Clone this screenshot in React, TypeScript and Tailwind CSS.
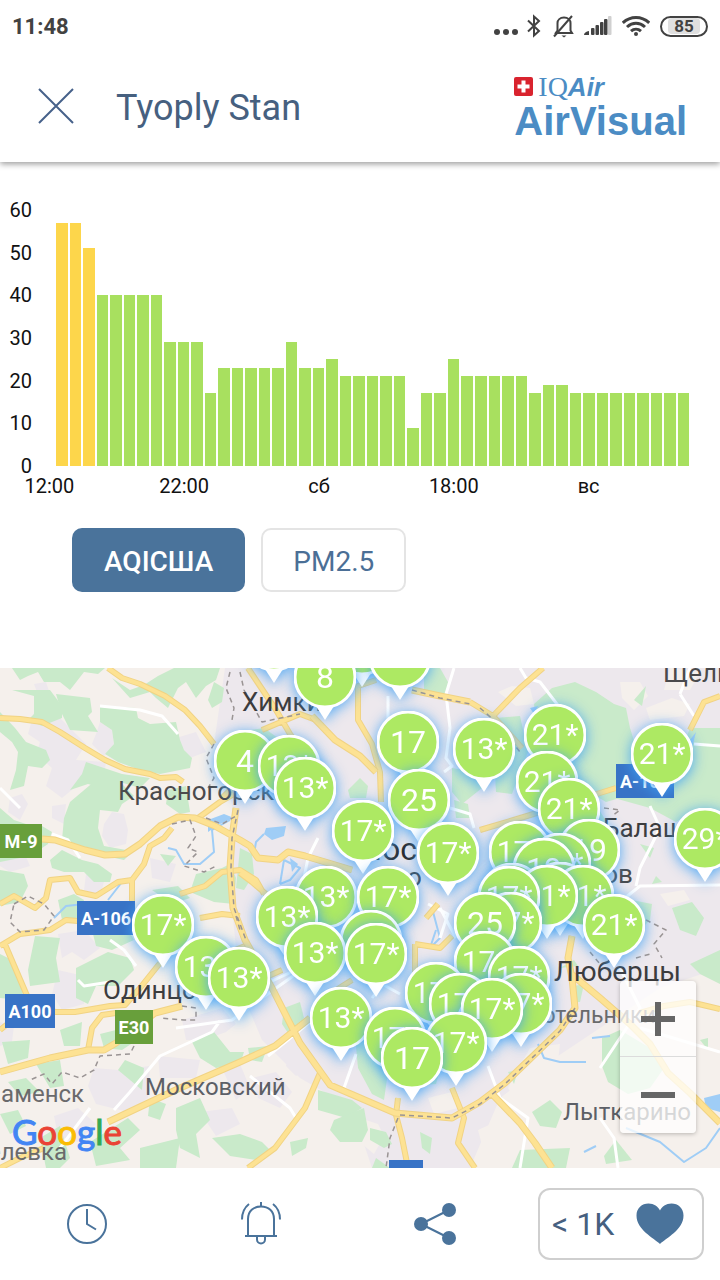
import { Fragment } from "react";

const HISTORY = [
  57, 57, 51, 40, 40, 40, 40, 40, 29, 29, 29, 17, 23, 23, 23, 23, 23, 29, 23,
  23, 25, 21, 21, 21, 21, 21, 9, 17, 17, 25, 21, 21, 21, 21, 21, 17, 19, 19,
  17, 17, 17, 17, 17, 17, 17, 17, 17,
];
const MAX_AQI = 60;
const Y_TICKS = [60, 50, 40, 30, 20, 10, 0];
const X_TICKS = ["12:00", "22:00", "сб", "18:00", "вс"];

type Pin = { x: number; y: number; label: string };

// pins further down the list are drawn on top
const PINS: Pin[] = [
  { x: 274, y: -28, label: "" },
  { x: 362, y: -24, label: "" },
  { x: 400, y: -11, label: "17" },
  { x: 325, y: 9, label: "8" },
  { x: 555, y: 67, label: "21*" },
  { x: 408, y: 74, label: "17" },
  { x: 484, y: 81, label: "13*" },
  { x: 662, y: 86, label: "21*" },
  { x: 245, y: 93, label: "4" },
  { x: 289, y: 98, label: "13*" },
  { x: 547, y: 114, label: "21*" },
  { x: 305, y: 120, label: "13*" },
  { x: 419, y: 132, label: "25" },
  { x: 569, y: 141, label: "21*" },
  { x: 363, y: 163, label: "17*" },
  { x: 705, y: 171, label: "29*" },
  { x: 589, y: 182, label: "19" },
  { x: 520, y: 184, label: "17*" },
  { x: 448, y: 185, label: "17*" },
  { x: 560, y: 196, label: "17*" },
  { x: 544, y: 201, label: "19" },
  { x: 560, y: 225, label: "" },
  { x: 512, y: 226, label: "" },
  { x: 583, y: 228, label: "21*" },
  { x: 547, y: 228, label: "21*" },
  { x: 509, y: 229, label: "17*" },
  { x: 326, y: 229, label: "13*" },
  { x: 388, y: 229, label: "17*" },
  { x: 287, y: 249, label: "13*" },
  { x: 511, y: 255, label: "17*" },
  { x: 485, y: 255, label: "25" },
  { x: 614, y: 257, label: "21*" },
  { x: 163, y: 257, label: "17*" },
  { x: 371, y: 273, label: "" },
  { x: 315, y: 285, label: "13*" },
  { x: 376, y: 286, label: "17*" },
  { x: 485, y: 294, label: "17*" },
  { x: 206, y: 299, label: "13*" },
  { x: 519, y: 309, label: "17*" },
  { x: 239, y: 310, label: "13*" },
  { x: 436, y: 325, label: "17*" },
  { x: 460, y: 336, label: "17*" },
  { x: 521, y: 336, label: "17*" },
  { x: 492, y: 341, label: "17*" },
  { x: 341, y: 350, label: "13*" },
  { x: 395, y: 370, label: "17*" },
  { x: 456, y: 375, label: "17*" },
  { x: 412, y: 390, label: "17" },
];

const CITIES = [
  { x: 242, y: 21, text: "Химки", style: "text-[26px] text-[#3c3c3e]" },
  { x: 663, y: -8, text: "Щелково", style: "text-[26px] text-[#4a4a4c]" },
  { x: 118, y: 110, text: "Красногорск", style: "text-[26px] text-[#4a4a4c]" },
  { x: 603, y: 147, text: "Балашиха", style: "text-[26px] text-[#3c3c3e]" },
  { x: 354, y: 165, text: "Москва", style: "text-[32px] text-[#2c2c2e]" },
  { x: 407, y: 196, text: "о", style: "text-[26px] text-[#3c3c3e]" },
  { x: 549, y: 193, text: "Реутов", style: "text-[26px] text-[#4a4a4c]" },
  { x: 554, y: 290, text: "Люберцы", style: "text-[28px] text-[#3c3c3e]" },
  { x: 103, y: 309, text: "Одинцово", style: "text-[26px] text-[#3c3c3e]" },
  { x: 528, y: 336, text: "Котельники", style: "text-[23px] text-[#6a6a6c]" },
  { x: 145, y: 407, text: "Московский", style: "text-[24px] text-[#5c5f66]" },
  { x: -27, y: 414, text: "Знаменск", style: "text-[24px] text-[#6a6a6c]" },
  { x: 563, y: 432, text: "Лыткарино", style: "text-[24px] text-[#5c5f66]" },
  { x: -55, y: 472, text: "Апрелевка", style: "text-[24px] text-[#6a6a6c]" },
];

const SHIELDS = [
  { x: 0, y: 156, text: "M-9", style: "w-[42px] bg-[#689f3b]" },
  { x: 77, y: 233, text: "A-106", style: "w-[58px] bg-[#3873c6]" },
  { x: 616, y: 96, text: "A-103", style: "w-[58px] bg-[#3873c6]" },
  { x: 5, y: 326, text: "A100", style: "w-[50px] bg-[#3873c6]" },
  { x: 115, y: 342, text: "E30", style: "w-[38px] bg-[#689f3b]" },
  { x: 389, y: 492, text: "M-4", style: "w-[34px] bg-[#3873c6]" },
];

const GOOGLE = [
  ["G", "text-[#4285f4]"],
  ["o", "text-[#ea4335]"],
  ["o", "text-[#fbbc05]"],
  ["g", "text-[#4285f4]"],
  ["l", "text-[#34a853]"],
  ["e", "text-[#ea4335]"],
];

const LILAC = [
  "M225 0H720V300L660 320L600 360L540 400L500 430L470 500H372L352 440L300 410L262 372L240 320L232 240L236 150L214 76Z",
  "M34 44L60 50L86 76L76 92L106 94L104 108L84 112L62 130L46 118L52 100L36 86L40 74L28 66Z",
  "M100 54L112 62L114 76L104 88L92 76L96 66Z",
  "M34 16L46 14L50 26L40 32Z",
  "M176 70L196 64L206 84L190 90L184 82Z",
  "M10 130L22 126L28 136L20 152L8 144Z",
  "M104 156L112 144L124 146L128 162L126 176L110 180L102 168Z",
  "M52 138L66 136L64 156L52 150Z",
  "M0 182L24 184L30 198L10 204L0 198Z",
  "M86 206L104 214L100 228L84 222Z",
  "M150 190L176 196L170 214L152 210Z",
  "M58 266L84 262L100 280L84 292L72 284L62 290Z",
  "M58 302L84 308L84 336L62 342L52 326Z",
  "M94 400L118 402L150 398L148 430L128 444L96 436L88 418Z",
  "M158 388L200 392L196 410L160 410Z",
  "M182 352L222 340L236 356L226 364L204 372L186 372Z",
  "M0 354L14 358L12 374L0 378Z",
  "M54 448L78 440L96 456L78 474L58 468Z",
  "M200 444L232 440L240 456L216 468Z",
  "M288 386L304 384L312 398L296 408L286 398Z",
  "M252 410L276 404L292 424L280 440L258 430Z",
  "M222 400L240 396L250 420L236 432Z",
];

const BEIGE = [
  "M530 430L560 400L600 376L640 404L660 430L700 440L720 420V500H560L530 470Z",
  "M508 420L530 380L560 376L556 410L520 440Z",
  "M478 462L500 452L524 470L540 500H488Z",
  "M498 24L512 18L530 20L534 36L516 38Z",
  "M620 14L640 14L648 28L634 42L622 30Z",
  "M646 40L672 30L690 36L684 48L650 52Z",
  "M670 0L700 4L690 22L664 22Z",
  "M366 452L378 456L384 468L374 486L362 476Z",
  "M428 430L452 424L458 440L434 446Z",
  "M660 226L684 222L690 232L668 238Z",
];

const GREEN = [
  "M12 0H105L98 6L84 4L70 22L60 14L44 14L38 4L28 8L20 12Z",
  "M112 10L130 22L144 17L158 8L174 0H220L216 12L206 18L196 30L186 14L178 20L168 40L156 30L150 24L130 30Z",
  "M12 22L34 28L34 46L28 52L42 58L62 50L62 38L50 22Z",
  "M56 26L90 30L92 44L88 48L98 64L70 62L62 46Z",
  "M100 38L136 40L138 50L150 56L176 54L180 72L184 82L192 90L190 100L160 106L140 102L118 94L105 86L114 76L112 62L100 54Z",
  "M0 44L15 60L26 74L46 82L50 92L42 100L28 98L24 118L10 122L16 102L18 84L12 74L0 64Z",
  "M86 94L104 100L122 106L150 110L140 120L120 114L102 120L88 116L70 122L82 106Z",
  "M70 134L96 112L118 112L134 128L122 136L118 144L100 142L98 160L104 178L126 182L140 176L124 192L96 186L62 172L64 150Z",
  "M168 122L186 118L190 144L180 146L166 136Z",
  "M208 32L214 14L224 20L222 34L212 40Z",
  "M0 140L14 152L26 156L42 164V158L52 164L48 176L30 188L0 194Z",
  "M50 192L62 182L82 192L98 196L112 206L110 214L94 214L84 204L64 204L52 200Z",
  "M0 202L24 206L28 218L20 234L0 238Z",
  "M58 232L74 226L84 232L78 252L62 252Z",
  "M196 206L222 200L230 196L236 210L234 236L214 234L190 224Z",
  "M152 222L178 218L190 230L172 236Z",
  "M160 186L176 188L168 198Z",
  "M35 268L60 270L56 290L60 314L30 318L28 302Z",
  "M92 262L128 262L134 272L112 282L96 278Z",
  "M76 300L108 284L130 290L134 302L118 318L96 318L88 336L76 330Z",
  "M0 286L8 290L24 314L22 332L0 330Z",
  "M60 362L82 354L80 378L64 378Z",
  "M2 374L30 372L28 390L8 396Z",
  "M100 366L124 360L134 374L122 382L104 380Z",
  "M125 392L144 400L142 422L118 402Z",
  "M192 374L214 364L230 384L244 384L240 396L216 400L200 390Z",
  "M36 396L60 392L64 418L50 420Z",
  "M8 414L26 410L40 424L20 428Z",
  "M176 440L200 430L210 452L196 466L200 490L180 480L176 462Z",
  "M90 474L128 450L140 462L120 480L130 492L96 498Z",
  "M140 480L180 470L176 500H140Z",
  "M40 470L60 458L70 490L60 500H46Z",
  "M212 470L240 466L262 474L270 482L256 492L230 488Z",
  "M0 446L18 442L26 458L10 466Z",
  "M150 430L166 436L160 452L148 448Z",
  "M284 340L300 334L304 350L290 368L282 356Z",
  "M248 380L268 378L262 394L250 392Z",
  "M318 422L332 426L352 432L362 440L346 450L318 442Z",
  "M334 452L364 440L368 462L362 474L340 474L330 462Z",
  "M370 460L386 464L392 476L384 480L370 472Z",
  "M290 474L308 470L306 480L292 488Z",
  "M354 356L372 366L388 404L384 432L372 426L358 400Z",
  "M420 464L432 470L430 486L422 480Z",
  "M412 394L440 402L436 416L414 418Z",
  "M376 490L390 500H372Z",
  "M348 122L360 110L368 118L366 130L350 130Z",
  "M240 180L252 186L254 206L244 222L236 220Z",
  "M250 62L264 60L278 70L266 80L250 78Z",
  "M424 0H440L448 14L446 32L424 24Z",
  "M452 100L476 104L482 120L462 136L452 124Z",
  "M454 132L468 136L470 150L456 150Z",
  "M496 50L520 48L528 84L512 126L496 124L494 90Z",
  "M534 36L552 20L575 14L596 24L614 36L626 40L630 60L640 92L650 100L620 130L606 134L586 122L560 100L536 60Z",
  "M634 32L646 18L642 38Z",
  "M612 98L680 86L690 60L720 60V158L690 146L676 154L650 140L614 130Z",
  "M578 150L598 140L608 156L594 170Z",
  "M640 176L654 180L650 190Z",
  "M652 216L662 214L656 208Z",
  "M632 232L652 236L650 252L640 262Z",
  "M672 240L692 234L704 250L696 268L680 262Z",
  "M690 296L720 282V316L700 306Z",
  "M602 370L620 362L650 380L664 400L650 420L628 426L608 414L602 398Z",
  "M574 318L584 316L580 334L576 334Z",
  "M532 444L550 432L562 444L556 460L540 458Z",
  "M520 482L570 480L566 500H512Z",
  "M604 488L616 472L632 492L606 496Z",
  "M508 404L518 402L514 416Z",
  "M700 372L708 370L708 382Z",
  "M560 300L574 292L578 298Z",
];

const WATER = [
  "M208 152L224 146L234 150L220 156L208 164Z",
  "M266 160L286 158L284 168L272 172L264 166Z",
  "M704 430L720 426V444L706 440Z",
  "M530 40L538 38L534 46Z",
  "M690 72L696 64L692 80Z",
  "M290 190L298 196L292 204Z",
];

const STREAMS = [
  "M168 180L176 182L184 196L200 196L214 184L212 162L230 152",
  "M264 166L256 174L254 186",
  "M284 192L280 216M284 192L300 200L290 212L280 216",
  "M432 240L440 270L430 280L436 262",
  "M538 376L544 390L560 394L586 394",
  "M592 370L610 368",
  "M626 460L660 474L684 494L706 480L720 460",
  "M584 484L596 478",
  "M54 250L66 238L84 236M108 232L122 214",
];

const STREETS = [
  "M220 353L212 364L160 388L130 424L114 442",
  "M176 360L232 352L262 330L296 306",
  "M110 272L124 282L136 298",
  "M78 312L84 318L110 314",
  "M250 408L290 440L296 450",
  "M356 386L344 420L350 424",
  "M454 0L446 26L450 60L446 90L452 98L444 104",
  "M388 28V60",
  "M520 0L526 10L540 14L560 40",
  "M680 26L694 48M680 26L690 0",
  "M620 234L640 218L720 217M650 138L660 160L640 200L636 218",
  "M694 76L720 78",
  "M620 300L640 340L600 400M640 360L720 384",
  "M488 398L500 430L528 450L520 500",
  "M600 450L614 470L618 500",
  "M318 170L308 190L304 210",
  "M428 236L448 246L440 270M440 240L456 270M412 300L440 310L450 322",
  "M450 140L470 146L474 160",
  "M100 38L140 42L162 48L178 66",
  "M52 166L68 172L80 190",
  "M268 388L320 346M244 326L300 300",
  "M372 330L382 316L400 326",
  "M0 120L20 140M60 480L90 440",
];

const ROADS = [
  "M108 0L122 10L140 16L165 28L185 42L200 58L214 76",
  "M0 50L20 51L42 54L60 64L85 80L105 92L125 101L150 106L160 110L176 109L183 114",
  "M0 236L14 228L35 240L46 230L50 212L70 210L78 224L96 228L118 214L132 212L144 196L150 178L164 170L172 160",
  "M132 212V235M198 150L220 134L234 126",
  "M180 226L205 218L222 204L240 202L256 212L264 226",
  "M0 278L20 266L36 264L50 262L66 252L78 253M4 274L28 330L55 344",
  "M55 344L75 344L110 338L125 337L140 320L160 295M200 250L222 246L240 248",
  "M88 382L92 360L102 347L116 345",
  "M0 362L10 354",
  "M262 62L300 46L316 52M248 0L276 42L290 66L300 80",
  "M376 12L358 18L358 52L372 76L380 104L381 134",
  "M493 48L520 20L543 0M470 34L493 48L522 80",
  "M690 62L704 34L720 28",
  "M480 162L527 148L600 125L616 120",
  "M320 405L305 440L275 480L248 500",
  "M398 430L396 447L402 470L408 500",
  "M452 420L464 450L458 475L475 500",
  "M240 205L252 214L266 226M264 310L282 302M330 326L352 312",
  "M415 276L440 280L452 268M415 276V304",
  "M640 345L664 338L690 334L720 341",
  "M0 500L20 490L44 480M232 120L222 130",
  "M426 250L438 236M230 284L250 276",
];

const HIGHWAYS = [
  "M42 171L55 172L85 182L105 187L125 186L140 176L160 158L178 149L195 150L215 158L240 172L250 178L258 190L278 192L288 184L305 188L352 202",
  "M0 404L50 390L88 382L104 382L116 375L155 345L182 338",
  "M108 454L180 420L240 394L275 378L310 350",
  "M312 48L335 72L360 88L376 104",
  "M236 140L232 170L230 200L233 240L245 272L272 320L300 375L330 417L395 445L452 450L480 434L505 415L560 362L575 340L572 310L568 290L572 268",
  "M412 22L440 28L470 34",
  "M492 426L520 455L535 475L552 500",
  "M570 305L600 330L630 356L650 376L668 405L690 425L720 455",
];

const RAILWAYS = [
  "M230 4L226 20L234 40L232 52M214 76L206 90L214 110L208 120",
  "M238 142L232 170L231 200L234 240L246 272",
  "M400 447L452 450L480 436L505 416L560 363L575 340",
  "M240 4L244 22L262 54L300 46M412 22L440 30L470 36",
  "M182 338L196 340L196 352L184 352L160 350",
  "M134 378L130 386L100 388L94 402L80 410L62 404L52 416L44 406L30 412",
  "M14 236L28 228L44 236L54 248L44 262L20 264L10 254Z",
  "M172 156L190 152L196 168L188 180L198 184L184 198L204 204L216 198",
  "M236 248L240 262M398 450L390 470L386 500",
  "M646 252L666 262L654 276L662 290M590 284L600 296M636 290L650 286M604 140L620 142L612 148",
  "M206 150L222 156L236 148M480 40L496 54L520 84",
];

const Icon = ({
  className,
  viewBox,
  children,
}: {
  className: string;
  viewBox: string;
  children: React.ReactNode;
}) => (
  <svg
    aria-hidden="true"
    className={className}
    viewBox={viewBox}
    fill="none"
    stroke="currentColor"
    strokeWidth="2"
  >
    {children}
  </svg>
);

const StatusBar = () => (
  <div className="flex h-[52px] items-center justify-between pl-3 pr-3 text-[#424242]">
    <span className="text-[22px] font-bold">11:48</span>
    <div className="flex items-center">
      <Icon className="mr-2 mt-3 h-2 w-6" viewBox="0 0 24 8">
        <g fill="currentColor" stroke="none">
          <circle cx="3" cy="4" r="3" />
          <circle cx="12" cy="4" r="3" />
          <circle cx="21" cy="4" r="3" />
        </g>
      </Icon>
      <Icon className="mr-2.5 h-6 w-4" viewBox="0 0 16 24">
        <path d="M2 6.500L13 17L8 21.500V2.500L13 7L2 17.500" />
      </Icon>
      <Icon className="mr-2 h-6 w-6" viewBox="0 0 24 24">
        <path d="M5 19H20L18.500 16.500V9C18.500 6 16 3.500 12 3.500S5.500 6 5.500 9V16.500L3 20" />
        <path d="M2 22.500L20 2" />
        <path d="M9.500 21.500H14.500L12 23.500Z" fill="currentColor" stroke="none" />
      </Icon>
      <Icon className="mr-2.5 h-5 w-7" viewBox="0 0 28 20">
        <g fill="currentColor" stroke="none">
          <path d="M0 19C0 17 2 15.500 5 15V19Z" />
          <rect x="7" y="12" width="3.500" height="7" rx="1" />
          <rect x="11.500" y="9" width="3.500" height="10" rx="1" />
          <rect x="16" y="6" width="3.500" height="13" rx="1" />
          <rect x="20" y="3" width="3.500" height="16" rx="1" />
          <rect x="24" y="0" width="3.500" height="19" rx="1" fill="#d0d0d0" />
        </g>
      </Icon>
      <Icon className="mr-2.5 h-6 w-7" viewBox="0 0 28 24">
        <g strokeWidth="3">
          <path d="M.8 8.800C8.500 1.700 19.500 1.700 27.200 8.800" />
          <path d="M5 13C10.500 8 17.500 8 23 13" />
          <path d="M9 17.200C12 14.500 16 14.500 19 17.200" />
        </g>
        <circle cx="14" cy="20" r="2" fill="currentColor" stroke="none" />
      </Icon>
      <span className="flex h-[21px] w-12 items-center justify-center rounded-full border-2 border-[#424242]">
        <span className="rounded bg-[#e0e0e0] px-1.5 text-[17px] font-bold leading-4">
          85
        </span>
      </span>
    </div>
  </div>
);

const Logo = () => (
  <div className="pt-1 text-[#4b8cc4]">
    <div className="flex items-center gap-1 leading-6">
      <svg aria-hidden="true" className="h-5 w-5" viewBox="0 0 20 20">
        <rect width="19" height="19" rx="2" fill="#d9232e" />
        <path
          d="M7.500 3.500H11.500V7.500H15.500V11.500H11.500V15.500H7.500V11.500H3.500V7.500H7.500Z"
          fill="#fff"
        />
      </svg>
      <span className="font-['Liberation_Serif',serif] text-[28px] leading-6">
        IQ
        <span className="font-['Liberation_Sans',sans-serif] text-[26px] font-bold italic">
          Air
        </span>
      </span>
    </div>
    <div className="font-['Liberation_Sans',sans-serif] text-[40px] font-bold leading-[44px]">
      AirVisual
    </div>
  </div>
);

const Header = () => (
  <header className="relative z-10 bg-white shadow-[0_2px_6px_rgba(0,0,0,0.4)]">
    <StatusBar />
    <div className="flex h-[110px] items-center justify-between pl-9 pr-[33px]">
      <div className="flex items-center gap-10">
        <button aria-label="Close" className="text-[#46618a]">
          <Icon className="h-10 w-10" viewBox="0 0 40 40">
            <path d="M3 2L37 36M37 2L3 36" />
          </Icon>
        </button>
        <h1 className="pt-0.5 text-[36px] text-[#46607f]">Tyoply Stan</h1>
      </div>
      <Logo />
    </div>
  </header>
);

const Chart = () => (
  <section className="overflow-hidden pt-9 text-xl leading-6 text-[#111]">
    <div className="flex h-[280px] pr-[31px]">
      <div className="flex w-8 flex-col justify-between text-right">
        {Y_TICKS.map((t) => (
          <span key={t}>{t}</span>
        ))}
      </div>
      <div className="my-3 ml-6 flex flex-1 items-end gap-0.5">
        {HISTORY.map((v, i) => (
          <div
            key={i}
            className={v > 50 ? "flex-1 bg-[#fdd64b]" : "flex-1 bg-[#a8e05f]"}
            style={{ height: `${(v / MAX_AQI) * 100}%` }}
          />
        ))}
      </div>
    </div>
    <div className="-ml-[18px] -mt-1 mr-16 grid grid-cols-5 text-center">
      {X_TICKS.map((t) => (
        <span key={t}>{t}</span>
      ))}
    </div>
    <div className="flex gap-4 px-[72px] pb-[76px] pt-[30px] text-[28px]">
      <button className="h-16 rounded-[10px] bg-[#4a739b] px-8 pt-1 font-medium text-white">
        AQIСША
      </button>
      <button className="h-16 rounded-[10px] border-2 border-[#e4e4e4] px-[30px] pt-1 text-[#4b6f96]">
        PM2.5
      </button>
    </div>
  </section>
);

const MapPin = ({ x, y, label }: Pin) => (
  <div
    className="absolute h-[74px] w-[62px] drop-shadow-[0_2px_7px_rgba(60,160,245,0.9)]"
    style={{ left: x - 31, top: y - 31 }}
  >
    <svg aria-hidden="true" className="h-full w-full" viewBox="0 0 62 74">
      <path d="M20 57L31 74L42 57Z" fill="#fff" />
      <circle cx="31" cy="31" r="30" fill="#ade963" stroke="#fff" strokeWidth="3" />
    </svg>
    <span
      className={
        label.endsWith("*")
          ? "absolute inset-x-0 top-0 text-center text-[30px] leading-[62px] text-white"
          : "absolute inset-x-0 top-0 text-center text-[32px] leading-[62px] text-white"
      }
    >
      {label}
    </span>
  </div>
);

const Terrain = () => (
  <svg
    aria-hidden="true"
    className="absolute inset-0 h-full w-full"
    viewBox="0 0 720 500"
    preserveAspectRatio="xMinYMin slice"
    fill="none"
    strokeLinejoin="round"
  >
    <rect width="720" height="500" fill="#f5f0ec" />
    <path d={LILAC.join("")} fill="#ede8ed" />
    <path d={BEIGE.join("")} fill="#f5f0ec" />
    {GREEN.map((d) => (
      <path key={d} d={d} fill="#c9eaca" />
    ))}
    <path d={WATER.join("")} fill="#9fcdf6" />
    <path d={STREAMS.join("")} stroke="#9fcdf6" strokeWidth="2" />
    <path d={STREETS.join("")} stroke="#fff" strokeWidth="3" />
    {[ROADS, HIGHWAYS].map((set, i) => (
      <Fragment key={i}>
        <path d={set.join("")} stroke="#f1d384" strokeWidth={i ? 7 : 6} />
        <path d={set.join("")} stroke="#fde293" strokeWidth={i ? 5 : 4} />
      </Fragment>
    ))}
    <path
      d={RAILWAYS.join("")}
      stroke="#9a9494"
      strokeWidth="1.500"
      strokeDasharray="5 4"
    />
  </svg>
);

const StationMap = () => (
  <section className="relative h-[500px] overflow-hidden" aria-label="Map">
    <Terrain />
    {CITIES.map((c) => (
      <span
        key={c.text}
        className={`absolute whitespace-nowrap leading-none ${c.style}`}
        style={{ left: c.x, top: c.y }}
      >
        {c.text}
      </span>
    ))}
    {SHIELDS.map((s) => (
      <span
        key={s.text}
        className={`absolute overflow-hidden whitespace-nowrap text-center text-lg font-bold leading-[35px] h-[34px] text-white ${s.style}`}
        style={{ left: s.x, top: s.y }}
      >
        {s.text}
      </span>
    ))}
    {PINS.map((p) => (
      <MapPin key={`${p.x}-${p.y}`} {...p} />
    ))}
    <div className="absolute bottom-4 left-3 font-[Lato,sans-serif] text-[35px] leading-[42px] [-webkit-text-stroke:1px]">
      {GOOGLE.map(([letter, color], i) => (
        <span key={i} className={color}>
          {letter}
        </span>
      ))}
    </div>
    <div className="absolute bottom-[35px] right-6 w-[76px] rounded-sm bg-white/75 text-[#666] shadow-[0_1px_4px_rgba(0,0,0,0.25)]">
      <button
        aria-label="Zoom in"
        className="flex h-[76px] w-full items-center justify-center border-b border-[#dcdcdc]"
      >
        <Icon className="h-9 w-9" viewBox="0 0 36 36">
          <path d="M1 18H35M18 1V35" strokeWidth="6" />
        </Icon>
      </button>
      <button
        aria-label="Zoom out"
        className="flex h-[76px] w-full items-center justify-center"
      >
        <Icon className="h-9 w-9" viewBox="0 0 36 36">
          <path d="M1 18H35" strokeWidth="6" />
        </Icon>
      </button>
    </div>
  </section>
);

const BottomNav = () => (
  <nav className="flex h-28 items-center bg-white text-[#4a739b]">
    <button aria-label="History" className="flex flex-1 justify-center">
      <Icon className="h-11 w-11" viewBox="0 0 44 44">
        <circle cx="22" cy="22" r="19" />
        <path d="M22 7V22L31 27.500" />
      </Icon>
    </button>
    <button aria-label="Alerts" className="flex flex-1 justify-center">
      <Icon className="h-11 w-11" viewBox="0 0 44 44">
        <path d="M6 34H38M9 34V17C9 9 14.500 4.500 22 4.500S35 9 35 17V34" />
        <path d="M22 4.500V0M18 34V37.500A4 4 0 0 0 26 37.500V34" />
        <path d="M10 2C5.500 5.500 3 10.500 3 17.500M34 2C38.500 5.500 41 10.500 41 17.500" />
      </Icon>
    </button>
    <button aria-label="Share" className="flex flex-1 justify-center">
      <Icon className="h-11 w-11" viewBox="0 0 44 44">
        <path d="M8 22L36 8M8 22L36 36" />
        <g fill="currentColor" stroke="none">
          <circle cx="8" cy="22" r="7" />
          <circle cx="36" cy="8" r="7" />
          <circle cx="36" cy="36" r="7" />
        </g>
      </Icon>
    </button>
    <div className="px-4">
      <button className="flex h-[72px] w-[166px] items-center justify-between rounded-xl border-2 border-[#cfcfcf] pl-3 pr-[18px] text-[32px] text-[#46607f]">
        <span>&lt; 1K</span>
        <svg
          aria-label="Followers"
          className="h-12 w-12"
          viewBox="0 0 48 48"
          fill="#4a739b"
        >
          <path d="M24 44C18 38 .5 30 .5 15.500C.5 8 6 3.500 12.500 3.500C18 3.500 22 6.500 24 10.500C26 6.500 30 3.500 35.500 3.500C42 3.500 47.500 8 47.500 15.500C47.500 30 30 38 24 44Z" />
        </svg>
      </button>
    </div>
  </nav>
);

export default function App() {
  return (
    <div className="bg-white font-[Roboto,'Noto_Sans',sans-serif]">
      <Header />
      <main>
        <Chart />
        <StationMap />
      </main>
      <BottomNav />
    </div>
  );
}
